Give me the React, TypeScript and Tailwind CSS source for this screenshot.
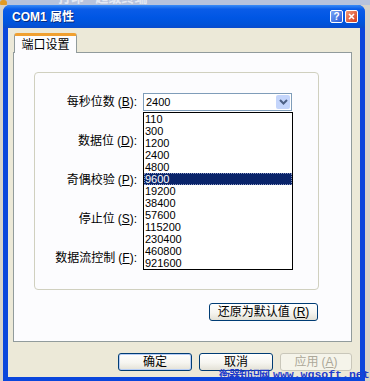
import { ReactNode } from "react";

const rows = [
  { label: "每秒位数", key: "B" },
  { label: "数据位", key: "D" },
  { label: "奇偶校验", key: "P" },
  { label: "停止位", key: "S" },
  { label: "数据流控制", key: "F" },
];

const baudRates = ["110", "300", "1200", "2400", "4800", "9600", "19200", "38400", "57600", "115200", "230400", "460800", "921600"];

function XpButton({ children, className = "", disabled = false }: { children: ReactNode; className?: string; disabled?: boolean }) {
  return (
    <div
      className={
        "flex items-center justify-center rounded-[3px] border text-[12px] leading-none " +
        (disabled
          ? "border-[#c9c7ba] bg-[#f5f4ea] text-[#aca899] "
          : "border-[#003c74] bg-[linear-gradient(to_bottom,#ffffff_0%,#f6f5f0_55%,#e3e1d6_100%)] text-black ") +
        className
      }
    >
      {children}
    </div>
  );
}

function Hotkey({ k }: { k: string }) {
  return (
    <span className="ml-[3px]">
      (<span className="underline underline-offset-1">{k}</span>)
    </span>
  );
}

export default function App() {
  return (
    <div className="relative w-[370px] h-[381px] overflow-hidden bg-[#d6d2ca] font-['Liberation_Sans','Noto_Sans_CJK_SC',sans-serif] text-black">
      {/* window behind the dialog */}
      <div className="relative h-[5px] overflow-hidden bg-[#b8c3dc] pl-[58px]">
        <div className="absolute left-0 top-0 w-[7px] h-[6px] rounded-full bg-[#e39a22]" />
        <div className="-mt-[9px] text-[13px] font-bold leading-[14px] text-[#e4e9f4]">打印 - 超级终端</div>
      </div>

      {/* dialog window */}
      <div className="ml-[3px] flex h-[376px] w-[362px] flex-col overflow-hidden rounded-t-[7px] bg-[#0a46dc]">
        <div className="flex h-[23px] shrink-0 items-center bg-[linear-gradient(to_bottom,#3b8cf6_0%,#0a5ce8_18%,#0056e4_55%,#0152d8_85%,#0a4bcc_100%)] pl-[9px] pr-[7px]">
          <span className="text-[12px] font-bold text-white [text-shadow:1px_1px_0_#0a2a7a]">COM1 属性</span>
          <div className="ml-auto flex gap-[2px]">
            <div className="flex h-[13px] w-[13px] items-center justify-center rounded-[2px] border border-white bg-[linear-gradient(135deg,#7aa6f7,#2a5ad6)] text-[10px] font-bold leading-none text-white">
              ?
            </div>
            <div className="flex h-[13px] w-[13px] items-center justify-center rounded-[2px] border border-white bg-[linear-gradient(135deg,#f29a78,#d43c1c)]">
              <svg width="7" height="7" viewBox="0 0 7 7">
                <path d="M1 1L6 6M6 1L1 6" stroke="white" strokeWidth="1.6" />
              </svg>
            </div>
          </div>
        </div>

        <div className="mx-[5px] flex h-[349px] shrink-0 flex-col bg-[#ece9d8] pt-[5px]">
          {/* tab */}
          <div className="relative z-10 -mb-px ml-[6px] flex h-[20px] w-[63px] items-center justify-center rounded-t-[3px] border-x border-t-[3px] border-x-[#919b9c] border-t-[#f0a030] bg-[#fcfcfe] text-[12px]">
            端口设置
          </div>

          {/* tab panel */}
          <div className="ml-[5px] h-[290px] w-[339px] border border-[#919b9c] bg-[#fcfcfe] pl-[20px] pt-[19px]">
            <div className="flex h-[218px] w-[285px] flex-col gap-[21px] rounded-[4px] border border-[#d0d0bf] pt-[20px]">
              {rows.map((row, i) => (
                <div key={row.key} className="flex h-[18px] items-center">
                  <div className="w-[102px] whitespace-nowrap text-right text-[12px] leading-none">
                    {row.label}
                    <Hotkey k={row.key} />:
                  </div>
                  {i === 0 && (
                    <div className="relative ml-[6px] flex h-[18px] w-[149px] items-center border border-[#7f9db9] bg-white">
                      <span className="pl-[2px] text-[11px] leading-none">2400</span>
                      <div className="ml-auto mr-px flex h-[14px] w-[14px] items-center justify-center rounded-[2px] bg-[#c4d5fb]">
                        <svg width="9" height="6" viewBox="0 0 9 6">
                          <path d="M1 1L4.5 4.5L8 1" stroke="#4d6185" strokeWidth="2" fill="none" />
                        </svg>
                      </div>

                      {/* open dropdown list */}
                      <div className="absolute left-[-1px] top-[18px] z-20 flex w-[150px] flex-col border border-black bg-white">
                        {baudRates.map((b) => (
                          <div
                            key={b}
                            className={
                              "h-[12px] pl-[1px] text-[11px] leading-[12px] " +
                              (b === "9600" ? "bg-[#0a246a] text-white outline-1 outline-dotted outline-offset-[-1px] outline-[#8a96c0]" : "")
                            }
                          >
                            {b}
                          </div>
                        ))}
                      </div>
                    </div>
                  )}
                </div>
              ))}
            </div>
            <XpButton className="ml-[175px] mt-[13px] h-[18px] w-[109px]">
              还原为默认值
              <Hotkey k="R" />
            </XpButton>
          </div>

          {/* bottom buttons */}
          <div className="mt-[11px] flex justify-end gap-[7px] pr-[8px]">
            <XpButton className="h-[18px] w-[74px] shadow-[inset_0_0_0_1px_#b6cdf6]">确定</XpButton>
            <XpButton className="h-[18px] w-[74px]">取消</XpButton>
            <XpButton disabled className="h-[18px] w-[72px]">
              应用
              <Hotkey k="A" />
            </XpButton>
          </div>
        </div>
      </div>

      {/* watermark */}
      <div className="absolute left-[219px] top-[369px] flex items-end whitespace-nowrap leading-none text-[#1f3ccc]">
        <span className="text-[11px] font-bold tracking-[-1px]">衡器知识网</span>
        <span className="ml-[4px] font-['Liberation_Mono',monospace] text-[11.5px] font-bold">www.wgsoft.net</span>
      </div>
    </div>
  );
}
